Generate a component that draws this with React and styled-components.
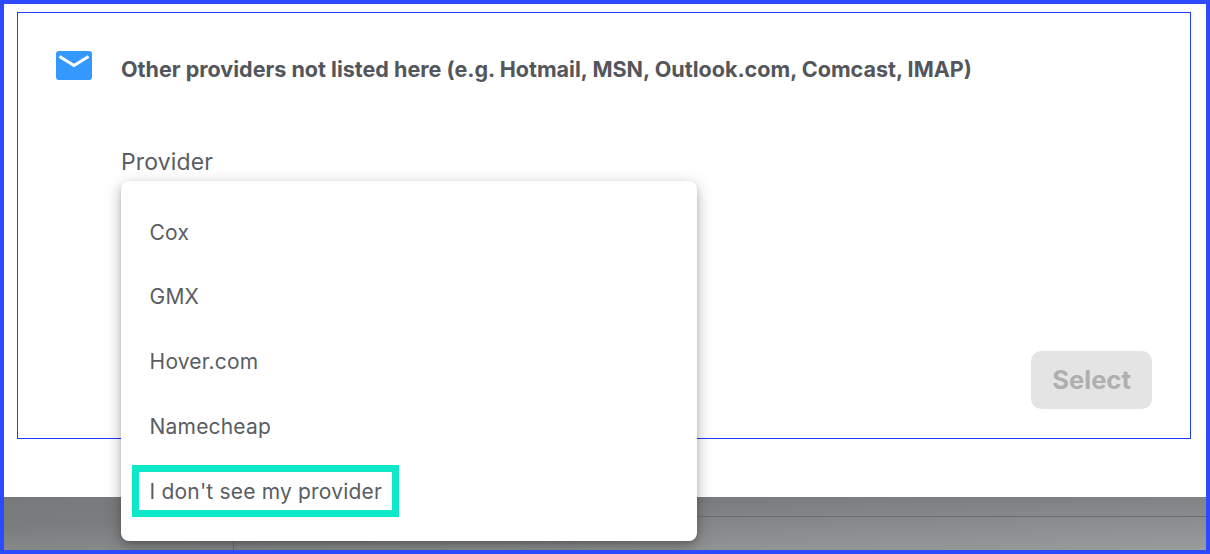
import React from "react";
import styled, { createGlobalStyle } from "styled-components";

const Global = createGlobalStyle`
  html, body {
    margin: 0;
    padding: 0;
    background: #fff;
  }
  body {
    font-family: Inter, "Liberation Sans", sans-serif;
    color: #5a5d63;
  }
`;

const Frame = styled.div`
  box-sizing: border-box;
  position: relative;
  width: 1210px;
  height: 554px;
  border: 4px solid #2c4bff;
  display: flex;
  flex-direction: column;
  overflow: hidden;
  background: #fff;
`;

const Dialog = styled.div`
  height: 493px;
  flex: none;
  padding: 8px 15px 0 13px;
  box-sizing: border-box;
  background: #fff;
`;

const Outline = styled.section`
  box-sizing: border-box;
  height: 427px;
  border: 1px solid #1f3bff;
  padding: 38px 38px 0 38px;
  display: flex;
  flex-direction: column;
`;

const Header = styled.div`
  display: flex;
  align-items: flex-start;
  gap: 29px;
`;

const Title = styled.h2`
  margin: 0;
  padding-top: 3px;
  font-size: 21.55px;
  line-height: 30px;
  font-weight: 700;
  color: #53565c;
`;

const Field = styled.label`
  display: block;
  margin: 63px 0 0 65px;
  font-size: 23px;
  line-height: 30px;
  letter-spacing: 0.15px;
  color: #5a5d63;
`;

const Footer = styled.div`
  display: flex;
  justify-content: flex-end;
  margin-top: 174px;
`;

const SelectButton = styled.button`
  width: 121px;
  height: 58px;
  padding: 0 0 2px;
  border: 0;
  border-radius: 10px;
  background: #e4e4e4;
  color: #afafaf;
  font: 700 25.6px Inter, "Liberation Sans", sans-serif;
`;

const Backdrop = styled.div`
  flex: 1;
  position: relative;
  background: linear-gradient(178deg, #78797a 0%, #7b7c7e 30%, #999b9d 100%);
`;

const BackdropLine = styled.div`
  position: absolute;
  left: 229px;
  right: 0;
  top: 19px;
  height: 1px;
  background: #6c6d6f;
`;

const BackdropDivider = styled.div`
  position: absolute;
  left: 229px;
  top: 19px;
  bottom: 0;
  width: 1px;
  background: #6c6d6f;
`;

const Menu = styled.ul`
  position: absolute;
  left: 117px;
  top: 177px;
  width: 576px;
  height: 360px;
  margin: 0;
  padding: 18.8px 0 0;
  box-sizing: border-box;
  list-style: none;
  background: #fff;
  border-radius: 8px;
  box-shadow: 0 5px 16px rgba(0, 0, 0, 0.3), 0 2px 4px rgba(0, 0, 0, 0.12);
`;

const MenuItem = styled.li`
  height: 64.75px;
  padding-left: 28.6px;
  display: flex;
  align-items: center;
  font-size: 21px;
  letter-spacing: 0.18px;
  color: #5a5d63;
`;

const Highlight = styled.div`
  position: absolute;
  left: 128px;
  top: 461px;
  width: 267px;
  height: 52px;
  box-sizing: border-box;
  border: 7px solid #0de8c8;
`;

function MailIcon() {
  return (
    <svg width="36" height="29" viewBox="0 0 36 29" style={{ flex: "none" }}>
      <rect width="36" height="29" rx="3" fill="#3399ff" />
      <path d="M3.5 5.5 18 14.5 32.5 5.5" fill="none" stroke="#fff" strokeWidth="3" />
    </svg>
  );
}

const providers = ["Cox", "GMX", "Hover.com", "Namecheap", "I don't see my provider"];

export default function App() {
  return (
    <>
      <Global />
      <Frame>
        <Dialog>
          <Outline>
            <Header>
              <MailIcon />
              <Title>Other providers not listed here (e.g. Hotmail, MSN, Outlook.com, Comcast, IMAP)</Title>
            </Header>
            <Field>Provider</Field>
            <Footer>
              <SelectButton disabled>Select</SelectButton>
            </Footer>
          </Outline>
        </Dialog>
        <Backdrop>
          <BackdropLine />
          <BackdropDivider />
        </Backdrop>
        <Menu>
          {providers.map((name) => (
            <MenuItem key={name}>{name}</MenuItem>
          ))}
        </Menu>
        <Highlight />
      </Frame>
    </>
  );
}
